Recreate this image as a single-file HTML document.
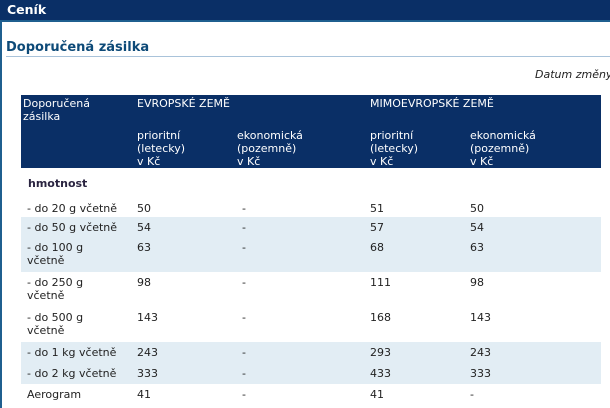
<!DOCTYPE html>
<html><head><meta charset="utf-8"><style>
body{margin:0;width:610px;height:408px;overflow:hidden;background:#fff;font-family:"DejaVu Sans","Liberation Sans",sans-serif;font-size:11px;color:#222;position:relative}
.bar{position:absolute;left:0;top:0;width:610px;height:20px;background:#0a2f66;border-bottom:2px solid #1f5f8f;color:#fff;font-weight:bold;font-size:12.5px;line-height:20px;padding-left:7px;box-sizing:content-box}
.lb{position:absolute;left:0;top:20px;width:2px;height:388px;background:#1f5f8f}
h2{position:absolute;left:6px;top:40px;margin:0;font-size:13px;color:#0d4a78;font-weight:bold}
.ul{position:absolute;left:6px;top:56px;width:604px;height:1px;background:#a9c3da}
.dt{position:absolute;left:535px;top:68px;font-style:italic;white-space:nowrap}
.t{position:absolute;left:21px;top:95px;width:580px;border-collapse:collapse}
.t td{padding:0;vertical-align:top;line-height:13px}
.h td{background:#0a2f66;color:#fff}
.b td{background:#e2edf4}
</style></head><body>
<div class="bar">Ceník</div>
<div class="lb"></div>
<h2>Doporučená zásilka</h2>
<div class="ul"></div>
<div class="dt">Datum změny</div>
<table class="t">
<colgroup><col style="width:116px"><col style="width:100px"><col style="width:133px"><col style="width:100px"><col></colgroup>
<tr class="h"><td style="padding:2px 0 0 2px;height:28px">Doporučená<br>zásilka</td><td colspan="2" style="padding-top:2px">EVROPSKÉ ZEMĚ</td><td colspan="2" style="padding-top:2px">MIMOEVROPSKÉ ZEMĚ</td></tr>
<tr class="h"><td></td><td style="height:39px;padding-top:4px">prioritní<br>(letecky)<br>v Kč</td><td style="padding-top:4px">ekonomická<br>(pozemně)<br>v Kč</td><td style="padding-top:4px">prioritní<br>(letecky)<br>v Kč</td><td style="padding-top:4px">ekonomická<br>(pozemně)<br>v Kč</td></tr>
<tr><td colspan="5" style="height:20px;padding:9px 0 0 7px;font-weight:bold;color:#2a2440">hmotnost</td></tr>
<tr><td style="height:15px;padding:5px 0 0 6px">- do 20 g včetně</td><td style="padding-top:5px">50</td><td style="padding:5px 0 0 5px">-</td><td style="padding-top:5px">51</td><td style="padding-top:5px">50</td></tr>
<tr class="b"><td style="height:17px;padding:4px 0 0 6px">- do 50 g včetně</td><td style="padding-top:4px">54</td><td style="padding:4px 0 0 5px">-</td><td style="padding-top:4px">57</td><td style="padding-top:4px">54</td></tr>
<tr class="b"><td style="height:31px;padding:3px 0 0 6px">- do 100 g<br>včetně</td><td style="padding-top:3px">63</td><td style="padding:3px 0 0 5px">-</td><td style="padding-top:3px">68</td><td style="padding-top:3px">63</td></tr>
<tr><td style="height:31px;padding:4px 0 0 6px">- do 250 g<br>včetně</td><td style="padding-top:4px">98</td><td style="padding:4px 0 0 5px">-</td><td style="padding-top:4px">111</td><td style="padding-top:4px">98</td></tr>
<tr><td style="height:31px;padding:4px 0 0 6px">- do 500 g<br>včetně</td><td style="padding-top:4px">143</td><td style="padding:4px 0 0 5px">-</td><td style="padding-top:4px">168</td><td style="padding-top:4px">143</td></tr>
<tr class="b"><td style="height:17px;padding:4px 0 0 6px">- do 1 kg včetně</td><td style="padding-top:4px">243</td><td style="padding:4px 0 0 5px">-</td><td style="padding-top:4px">293</td><td style="padding-top:4px">243</td></tr>
<tr class="b"><td style="height:17px;padding:4px 0 0 6px">- do 2 kg včetně</td><td style="padding-top:4px">333</td><td style="padding:4px 0 0 5px">-</td><td style="padding-top:4px">433</td><td style="padding-top:4px">333</td></tr>
<tr><td style="height:17px;padding:4px 0 0 6px">Aerogram</td><td style="padding-top:4px">41</td><td style="padding:4px 0 0 5px">-</td><td style="padding-top:4px">41</td><td style="padding-top:4px">-</td></tr>
</table>
</body></html>
